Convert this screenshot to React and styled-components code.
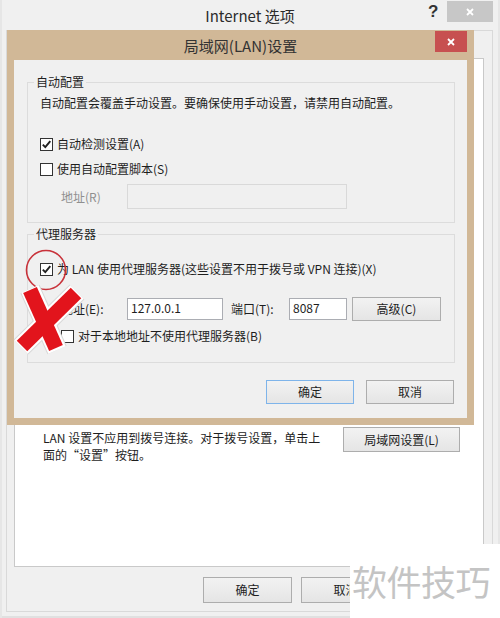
import React from "react";
import styled, { createGlobalStyle } from "styled-components";

const Global = createGlobalStyle`
  html, body { margin: 0; padding: 0; background: #f0f0f0; }
  body { width: 500px; height: 618px; overflow: hidden; }
  * { box-sizing: border-box; }
`;

const FONT = `"Noto Sans CJK SC", "Noto Sans", sans-serif`;

const Window = styled.div`
  position: relative;
  width: 500px;
  height: 618px;
  background: #f0f0f0;
  font-family: ${FONT};
  font-size: 12px;
  color: #1e1e1e;
  box-shadow: inset 2px 0 0 #e6e6e6, inset -2px 0 0 #e6e6e6, inset 0 -2px 0 #e0e0e0;
  display: flex;
  flex-direction: column;
  overflow: hidden;
`;

const TitleBar = styled.div`
  position: relative;
  height: 30px;
  flex: none;
  display: flex;
  align-items: center;
  justify-content: center;
`;

const Title = styled.div`
  font-size: 15px;
  color: ${(p) => p.$color || "#2b2b2b"};
  line-height: 20px;
  margin-top: ${(p) => p.$mt || 0}px;
`;

const HelpMark = styled.span`
  position: absolute;
  left: 428px;
  top: 2px;
  font-family: "Liberation Sans", sans-serif;
  font-weight: bold;
  font-size: 17px;
  color: #333;
`;

const CloseBtn = styled.div`
  position: absolute;
  left: ${(p) => p.$left}px;
  top: ${(p) => p.$top}px;
  width: ${(p) => p.$w}px;
  height: ${(p) => p.$h}px;
  background: ${(p) => p.$bg};
  display: flex;
  align-items: center;
  justify-content: center;
`;

const TabFrame = styled.div`
  flex: 1;
  margin: 0 7px 6px 6px;
  border: 1px solid #d9d9d9;
  padding: 27px 8px 0 7px;
  display: flex;
  flex-direction: column;
`;

const WhitePanel = styled.div`
  height: 509px;
  background: #fff;
  border: 1px solid #c9c9c9;
  padding: 368px 0 0 28px;
  display: flex;
  align-items: flex-start;
  gap: 14px;
`;

const Note = styled.div`
  width: 286px;
  line-height: 17px;
  margin-top: 2px;
  color: #1e1e1e;
`;

const Footer = styled.div`
  display: flex;
  gap: 9px;
  padding-left: 189px;
  margin-top: 10px;
`;

const Button = styled.button`
  width: ${(p) => p.$w || 88}px;
  height: ${(p) => p.$h || 24}px;
  border: 1px solid ${(p) => (p.$default ? "#7eb4ea" : "#adadad")};
  background: linear-gradient(#f2f2f2, #e5e5e5);
  font-family: ${FONT};
  font-size: 12px;
  color: #1e1e1e;
  padding: 0;
  line-height: 20px;
  flex: none;
`;

/* ---------- LAN dialog ---------- */

const Dialog = styled.div`
  position: absolute;
  left: 7px;
  top: 30px;
  width: 467px;
  height: 395px;
  background: #d1b897;
  display: flex;
  flex-direction: column;
`;

const DialogTitle = styled.div`
  height: 30px;
  flex: none;
  display: flex;
  align-items: center;
  justify-content: center;
`;

const DialogBody = styled.div`
  flex: 1;
  margin: 0 7px 7px 7px;
  background: #f0f0f0;
  padding: 22px 12px 0 13px;
  display: flex;
  flex-direction: column;
`;

const Group = styled.div`
  position: relative;
  border: 1px solid #dcdcdc;
  height: ${(p) => p.$h}px;
  padding: ${(p) => p.$pt}px 0 0 12px;
  margin-top: ${(p) => p.$mt || 0}px;
  display: flex;
  flex-direction: column;
`;

const Legend = styled.span`
  position: absolute;
  left: 6px;
  top: -9px;
  padding: 0 2px;
  background: #f0f0f0;
  line-height: 16px;
  color: #1e1e1e;
`;

const Desc = styled.div`
  line-height: 16px;
  white-space: nowrap;
`;

const CheckRow = styled.label`
  display: flex;
  align-items: center;
  gap: 4px;
  height: 16px;
  line-height: 16px;
  margin-top: ${(p) => p.$mt || 0}px;
  margin-left: ${(p) => p.$indent || 0}px;
  white-space: nowrap;
`;

const Box = styled.span`
  width: 13px;
  height: 13px;
  border: 1px solid #333;
  background: #fff;
  display: flex;
  align-items: center;
  justify-content: center;
  flex: none;
`;

const FieldRow = styled.div`
  display: flex;
  align-items: center;
  margin-top: ${(p) => p.$mt || 0}px;
  margin-left: ${(p) => p.$indent || 0}px;
  white-space: nowrap;
`;

const Label = styled.span`
  width: ${(p) => p.$w}px;
  flex: none;
  color: ${(p) => (p.$disabled ? "#8f8f8f" : "#1e1e1e")};
  line-height: 16px;
`;

const Input = styled.div`
  width: ${(p) => p.$w}px;
  height: ${(p) => p.$h || 22}px;
  flex: none;
  border: 1px solid ${(p) => (p.$disabled ? "#d9d9d9" : "#abadb3")};
  background: ${(p) => (p.$disabled ? "#f0f0f0" : "#fff")};
  padding: 1px 3px;
  line-height: 16px;
  margin-right: ${(p) => p.$mr || 0}px;
`;

const DialogFooter = styled.div`
  display: flex;
  justify-content: flex-end;
  gap: 12px;
  margin-top: 17px;
  padding-right: 1px;
`;

const Overlay = styled.svg`
  position: absolute;
  left: 0;
  top: 240px;
  pointer-events: none;
`;

const Watermark = styled.div`
  position: absolute;
  left: 350px;
  top: 544px;
  width: 150px;
  height: 74px;
  background: #fff;
  padding: 15px 0 0 2px;
  font-size: 35px;
  line-height: 44px;
  color: #c4c4c4;
  letter-spacing: -0.5px;
  white-space: nowrap;
`;

const Check = () => (
  <svg width="11" height="11" viewBox="0 0 11 11">
    <path d="M1.8 5.6 L4.3 8.2 L9.3 2.2" fill="none" stroke="#222" strokeWidth="1.9" />
  </svg>
);

const XGlyph = ({ size, color, width }) => (
  <svg width={size} height={size} viewBox="0 0 10 10">
    <path d="M2 2 L8 8 M8 2 L2 8" stroke={color} strokeWidth={width} />
  </svg>
);

const CheckBox = ({ checked, children, mt, indent }) => (
  <CheckRow $mt={mt} $indent={indent}>
    <Box>{checked && <Check />}</Box>
    <span>{children}</span>
  </CheckRow>
);

export default function App() {
  return (
    <>
      <Global />
      <Window>
        <TitleBar>
          <Title $mt={2}>Internet 选项</Title>
          <HelpMark>?</HelpMark>
          <CloseBtn $left={447} $top={1} $w={46} $h={21} $bg="#c7c7c7">
            <XGlyph size={10} color="#fff" width={1.8} />
          </CloseBtn>
        </TitleBar>
        <TabFrame>
          <WhitePanel>
            <Note>LAN 设置不应用到拨号连接。对于拨号设置，单击上面的“设置”按钮。</Note>
            <Button $w={117} $h={25}>局域网设置(L)</Button>
          </WhitePanel>
          <Footer>
            <Button $w={89} $h={26}>确定</Button>
            <Button $w={89} $h={26}>取消</Button>
          </Footer>
        </TabFrame>

        <Dialog>
          <DialogTitle>
            <Title $color="#333" $mt={1}>局域网(LAN)设置</Title>
            <CloseBtn $left={428} $top={1} $w={32} $h={21} $bg="#c75050">
              <XGlyph size={10} color="#fff" width={1.8} />
            </CloseBtn>
          </DialogTitle>
          <DialogBody>
            <Group $h={141} $pt={12}>
              <Legend>自动配置</Legend>
              <Desc>自动配置会覆盖手动设置。要确保使用手动设置，请禁用自动配置。</Desc>
              <CheckBox checked mt={25}>自动检测设置(A)</CheckBox>
              <CheckBox mt={9}>使用自动配置脚本(S)</CheckBox>
              <FieldRow $mt={7} $indent={21}>
                <Label $w={66} $disabled>地址(R)</Label>
                <Input $w={220} $h={25} $disabled />
              </FieldRow>
            </Group>
            <Group $h={129} $pt={26} $mt={11}>
              <Legend>代理服务器</Legend>
              <CheckBox checked>为 LAN 使用代理服务器(这些设置不用于拨号或 VPN 连接)(X)</CheckBox>
              <FieldRow $mt={20} $indent={21}>
                <Label $w={66}>地址(E):</Label>
                <Input $w={96} $mr={8}>127.0.0.1</Input>
                <Label $w={58}>端口(T):</Label>
                <Input $w={58} $mr={5}>8087</Input>
                <Button $w={89} $h={24}>高级(C)</Button>
              </FieldRow>
              <CheckBox mt={7} indent={21}>对于本地地址不使用代理服务器(B)</CheckBox>
            </Group>
            <DialogFooter>
              <Button $default $w={88} $h={24}>确定</Button>
              <Button $w={88} $h={24}>取消</Button>
            </DialogFooter>
          </DialogBody>
        </Dialog>

        <Overlay width="100" height="130" viewBox="0 0 100 130">
          <circle cx="46" cy="30" r="19.5" fill="none" stroke="#c8323a" strokeWidth="1.6" />
          <g stroke="#d8d8d8" strokeWidth="21" strokeLinecap="butt" fill="none">
            <path d="M30 49 L57 110" />
            <path d="M77 52 L21 107" />
          </g>
          <g stroke="#ffffff" strokeWidth="19" strokeLinecap="butt" fill="none">
            <path d="M30 49 L57 110" />
            <path d="M77 52 L21 107" />
          </g>
          <g stroke="#e2141c" strokeWidth="15" strokeLinecap="butt" fill="none">
            <path d="M30 50 L56 108" />
            <path d="M76 53 L22 106" />
          </g>
        </Overlay>

        <Watermark>软件技巧</Watermark>
      </Window>
    </>
  );
}
